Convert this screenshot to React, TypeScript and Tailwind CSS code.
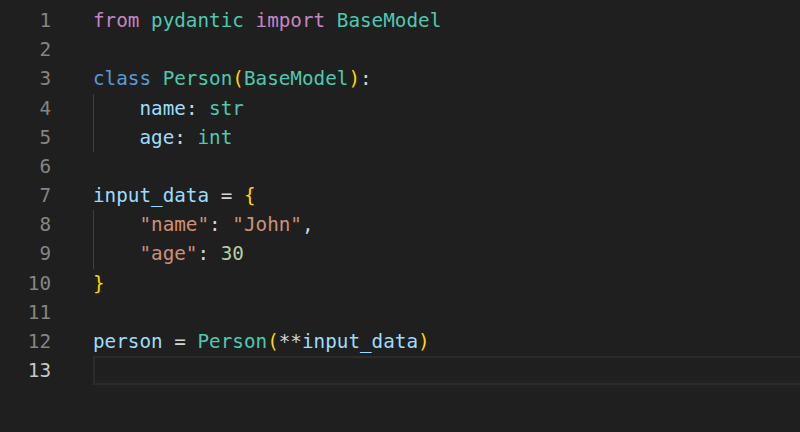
type Tok = [string, string];

const C = {
  kw: "text-[#c586c0]",
  type: "text-[#4ec9b0]",
  cls: "text-[#569cd6]",
  v: "text-[#9cdcfe]",
  p: "text-[#ffd700]",
  op: "text-[#d4d4d4]",
  str: "text-[#ce9178]",
  num: "text-[#b5cea8]",
};

const lines: Tok[][] = [
  [["from", C.kw], [" ", C.op], ["pydantic", C.type], [" ", C.op], ["import", C.kw], [" ", C.op], ["BaseModel", C.type]],
  [],
  [["class", C.cls], [" ", C.op], ["Person", C.type], ["(", C.p], ["BaseModel", C.type], [")", C.p], [":", C.op]],
  [["    ", C.op], ["name", C.v], [": ", C.op], ["str", C.type]],
  [["    ", C.op], ["age", C.v], [": ", C.op], ["int", C.type]],
  [],
  [["input_data", C.v], [" = ", C.op], ["{", C.p]],
  [["    ", C.op], ['"name"', C.str], [": ", C.op], ['"John"', C.str], [",", C.op]],
  [["    ", C.op], ['"age"', C.str], [": ", C.op], ["30", C.num]],
  [["}", C.p]],
  [],
  [["person", C.v], [" = ", C.op], ["Person", C.type], ["(", C.p], ["**", C.op], ["input_data", C.v], [")", C.p]],
  [],
];

const guides = new Set([3, 4, 7, 8]);

export default function App() {
  return (
    <div className="w-[800px] h-[432px] overflow-hidden bg-[#1f1f1f] pt-[6px] font-['DejaVu_Sans_Mono',monospace] text-[19.3px]">
      {lines.map((toks, i) => {
        const current = i === 12;
        return (
          <div key={i} className="flex h-[29.2px] items-center leading-none">
            <div className={`w-[51px] shrink-0 text-right ${current ? "text-[#c8c8c8]" : "text-[#858585]"}`}>
              {i + 1}
            </div>
            <div
              className={`relative ml-[42px] flex h-full flex-1 items-center whitespace-pre ${
                current ? "border-y-2 border-l-2 border-[#2c2c2c]" : ""
              }`}
            >
              {guides.has(i) && <div className="absolute left-0 top-0 h-full w-px bg-[#404040]" />}
              {toks.map(([t, c], j) => (
                <span key={j} className={c}>
                  {t}
                </span>
              ))}
            </div>
          </div>
        );
      })}
    </div>
  );
}
